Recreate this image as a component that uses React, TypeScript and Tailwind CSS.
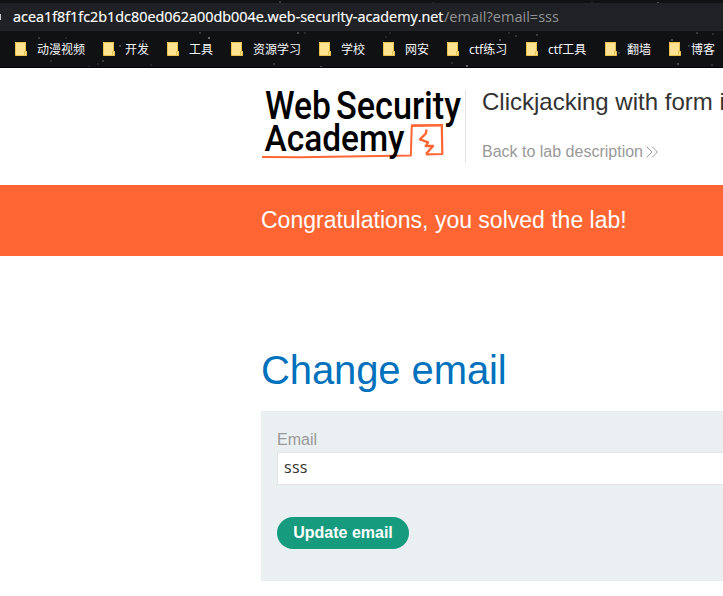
const bookmarks = [
  { label: "动漫视频", width: "w-[48px]" },
  { label: "开发", width: "w-[24px]" },
  { label: "工具", width: "w-[24px]" },
  { label: "资源学习", width: "w-[48px]" },
  { label: "学校", width: "w-[24px]" },
  { label: "网安", width: "w-[24px]" },
  { label: "ctf练习", width: "w-[39px]" },
  { label: "ctf工具", width: "w-[39px]" },
  { label: "翻墙", width: "w-[24px]" },
  { label: "博客", width: "w-[24px]" },
];

// Faint star field of the browser theme: x, y, opacity
const stars = [
  [38, 37, 0.3], [65, 37, 0.15], [119, 45, 0.4], [142, 40, 0.4], [208, 37, 0.6], [199, 32, 0.3],
  [102, 60, 0.3], [97, 63, 0.15], [50, 60, 0.2], [150, 64, 0.15], [88, 66, 0.2], [279, 1, 0.3],
  [297, 32, 0.4], [304, 32, 0.2], [385, 36, 0.15], [389, 32, 0.15], [273, 63, 0.3], [320, 66, 0.5],
  [451, 62, 0.2], [466, 65, 0.6], [499, 39, 0.5], [508, 32, 0.2], [515, 35, 0.25], [536, 34, 0.3],
  [618, 52, 0.3], [671, 39, 0.4], [696, 32, 0.3], [712, 33, 0.2], [677, 63, 0.4], [711, 64, 0.2],
  [688, 45, 0.3], [657, 2, 0.4], [591, 2, 0.15], [432, 2, 0.15],
];

function FolderIcon() {
  return (
    <svg width="12" height="14" viewBox="0 0 12 14" className="shrink-0">
      <path d="M0 0H11V9.5H12V13.5H0Z" fill="#ffe391" />
      <path d="M.5 13.5V.5H10.5V9.5M.5 13.5H11.5V9.5H9.5V13" fill="none" stroke="#e9c34d" strokeWidth="1" />
    </svg>
  );
}

function BrowserChrome() {
  return (
    <header className="relative h-[68px] overflow-hidden border-b border-black bg-[#0f1113]">
      <svg className="absolute inset-0" width="723" height="68">
        {stars.map(([x, y, o]) => (
          <rect key={`${x}-${y}`} x={x} y={y} width="2" height="2" fill="#b9bfce" opacity={o * 0.8} />
        ))}
      </svg>
      <div className="relative mt-[3px] flex h-7 items-center bg-[#202124] font-['Open_Sans','Noto_Sans',sans-serif] text-[14px] whitespace-nowrap">
        <span className="h-[6px] w-px bg-[#c8c8c8]" />
        <svg className="h-7 w-[560px]" viewBox="1 0 560 28">
          <text x="13" y="19" fill="#ffffff" stroke="#ffffff" strokeWidth="0.2" textLength="430.5" lengthAdjust="spacingAndGlyphs">
            acea1f8f1fc2b1dc80ed062a00db004e.web-security-academy.net
          </text>
          <text x="444" y="19" fill="#929496" textLength="115" lengthAdjust="spacingAndGlyphs">
            /email?email=sss
          </text>
        </svg>
      </div>
      <nav className="relative flex h-9 items-center gap-[18px] pl-[15px] font-['Noto_Sans','Noto_Sans_CJK_SC',sans-serif] text-xs text-[#f4f5f7]">
        {bookmarks.map(({ label, width }) => (
          <div key={label} className="flex shrink-0 items-center gap-[10px]">
            <FolderIcon />
            <span className={`${width} pt-[2px] whitespace-nowrap`}>{label}</span>
          </div>
        ))}
      </nav>
    </header>
  );
}

function Logo() {
  return (
    <svg width="204" height="72" viewBox="261 90 204 72" className="shrink-0 overflow-visible font-['Roboto',sans-serif] font-medium">
      <g fill="none" stroke="#ff6633" strokeLinejoin="round">
        <path d="M262 157L300 157.2L410.8 155.5L411.8 125.5" strokeWidth="2" />
        <path d="M411 125.6L443 125.2" strokeWidth="2.6" />
        <path d="M441.8 125L442.3 154L426 154.4" strokeWidth="2.2" />
        <path d="M426.6 129.5L425.8 133.5L420 139.3L428 142.3L425.8 146L433 146L426 154" strokeWidth="2.4" />
      </g>
      <g fill="#000">
        <text x="265" y="119" fontSize="38.5" textLength="66" lengthAdjust="spacingAndGlyphs">Web</text>
        <text x="336" y="119" fontSize="38.5" textLength="125" lengthAdjust="spacingAndGlyphs">Security</text>
        <text x="264.5" y="151" fontSize="37" textLength="140" lengthAdjust="spacingAndGlyphs">Academy</text>
      </g>
    </svg>
  );
}

export default function App() {
  return (
    <div className="h-[596px] w-[723px] overflow-hidden bg-white font-['Liberation_Sans',Arial,sans-serif] text-[#333332]">
      <BrowserChrome />
      <section className="flex h-[117px] pt-[22px] pl-[261px]">
        <Logo />
        <div className="h-[73px] w-[258px] shrink-0 border-l border-[#e1e1e1] pl-4 whitespace-nowrap">
          <h2 className="text-[24px] leading-6">Clickjacking with form input data</h2>
          <a className="mt-[28px] flex items-center gap-[3px] text-base leading-5 text-[#999999]">
            Back to lab description
            <svg width="12" height="12" viewBox="0 0 12 12" fill="none" stroke="#999999" strokeWidth="1">
              <path d="M.5 .5L6 6L.5 11.5M6 .5L11.5 6L6 11.5" />
            </svg>
          </a>
        </div>
      </section>
      <section className="flex h-[71px] items-center bg-[#ff6633] pb-px pl-[261px] text-[23px] whitespace-nowrap text-white">
        Congratulations, you solved the lab!
      </section>
      <main className="pt-[90px] pl-[261px]">
        <h1 className="text-[40px] leading-[48px] tracking-[-0.1px] whitespace-nowrap text-[#0071bc]">Change email</h1>
        <form className="mt-[17px] h-[170px] w-[480px] bg-[#eaeff2] px-4 pt-[17px]">
          <label className="mb-px block text-base leading-[23px] text-[#999999]">Email</label>
          <input
            defaultValue="sss"
            className="block h-[33px] w-full border border-[#e4e4e4] bg-white px-[6px] pb-[3px] font-['Open_Sans',sans-serif] text-[16px] tracking-[0.3px] outline-none"
          />
          <button type="button" className="mt-8 block h-8 w-[132px] rounded-full bg-[#179b7f] text-base font-bold whitespace-nowrap text-white">
            Update email
          </button>
        </form>
      </main>
    </div>
  );
}
